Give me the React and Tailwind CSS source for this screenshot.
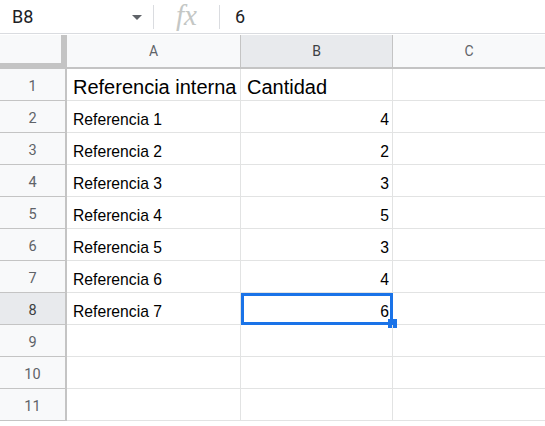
import React from "react";

const rows = [
  ["Referencia interna", "Cantidad", true],
  ["Referencia 1", "4"],
  ["Referencia 2", "2"],
  ["Referencia 3", "3"],
  ["Referencia 4", "5"],
  ["Referencia 5", "3"],
  ["Referencia 6", "4"],
  ["Referencia 7", "6"],
  ["", ""],
  ["", ""],
  ["", ""],
];

function FormulaBar() {
  return (
    <div className="flex h-[34px] items-center border-b border-[#dadce0] bg-white font-['Roboto',sans-serif]">
      <div className="flex w-[153px] items-center justify-between pl-[12px] pr-[11px]">
        <span className="text-[18px] text-[#202124]">B8</span>
        <svg width="10" height="5" viewBox="0 0 10 5" className="mt-[1px]">
          <path d="M0 0h10L5 5z" fill="#5f6368" />
        </svg>
      </div>
      <div className="h-[24px] w-px bg-[#dadce0]" />
      <div className="flex w-[65px] items-center justify-center pb-[2px]">
        <span className="font-['Liberation_Serif',serif] text-[29px] italic leading-none text-[#c4c7c5]">fx</span>
      </div>
      <div className="h-[24px] w-px bg-[#dadce0]" />
      <span className="pl-[15px] text-[18px] text-[#202124]">6</span>
    </div>
  );
}

function HeaderRow() {
  return (
    <div className="flex h-[35px] pt-px font-['Roboto',sans-serif] text-[14px] text-[#5f6368]">
      <div className="w-[67px] shrink-0 border-b-[6px] border-r-[6px] border-[#c4c4c4] bg-[#f8f9fa]" />
      <div className="flex w-[174px] shrink-0 items-center justify-center border-b-2 border-r border-[#c4c4c4] bg-[#f8f9fa]">A</div>
      <div className="flex w-[152px] shrink-0 items-center justify-center border-b-2 border-r border-[#c4c4c4] bg-[#e8eaed] text-[#3c4043]">B</div>
      <div className="flex flex-1 items-center justify-center border-b-2 border-[#c4c4c4] bg-[#f8f9fa]">C</div>
    </div>
  );
}

function Row({ n, a, b, big }) {
  const selected = n === 8;
  return (
    <div className="flex h-[32px]">
      <div
        className={`flex w-[67px] shrink-0 items-center justify-center border-b border-r-2 border-[#c4c4c4] pt-[4px] font-['Roboto',sans-serif] text-[14.5px] ${
          selected ? "bg-[#e8eaed] text-[#3c4043]" : "bg-[#f8f9fa] text-[#5f6368]"
        }`}
      >
        {n}
      </div>
      <div
        className={`flex w-[174px] shrink-0 items-center overflow-visible whitespace-nowrap border-b border-r border-[#e2e3e3] pl-[6px] font-['Liberation_Sans',Arial,sans-serif] text-black ${
          big ? "text-[20px] pt-[5px]" : "text-[15.7px] pt-[6px]"
        }`}
      >
        {a}
      </div>
      <div
        className={`relative flex w-[152px] shrink-0 items-center border-b border-r border-[#e2e3e3] font-['Liberation_Sans',Arial,sans-serif] text-black ${
          big ? "justify-start pl-[6px] pt-[5px] text-[20px]" : "justify-end pr-[3px] pt-[6px] text-[15.7px]"
        }`}
      >
        {b}
        {selected && (
          <>
            <div className="pointer-events-none absolute left-0 top-0 bottom-[-1px] right-[-1px] border-[3px] border-[#1a73e8]" />
            <div className="absolute bottom-[-4px] right-[-5px] h-[9px] w-[9px] bg-[#1a73e8]" />
          </>
        )}
      </div>
      <div className="flex-1 border-b border-[#e2e3e3]" />
    </div>
  );
}

export default function App() {
  return (
    <div className="h-[426px] w-[545px] overflow-hidden bg-white">
      <FormulaBar />
      <HeaderRow />
      {rows.map(([a, b, big], i) => (
        <Row key={i} n={i + 1} a={a} b={b} big={big} />
      ))}
    </div>
  );
}
